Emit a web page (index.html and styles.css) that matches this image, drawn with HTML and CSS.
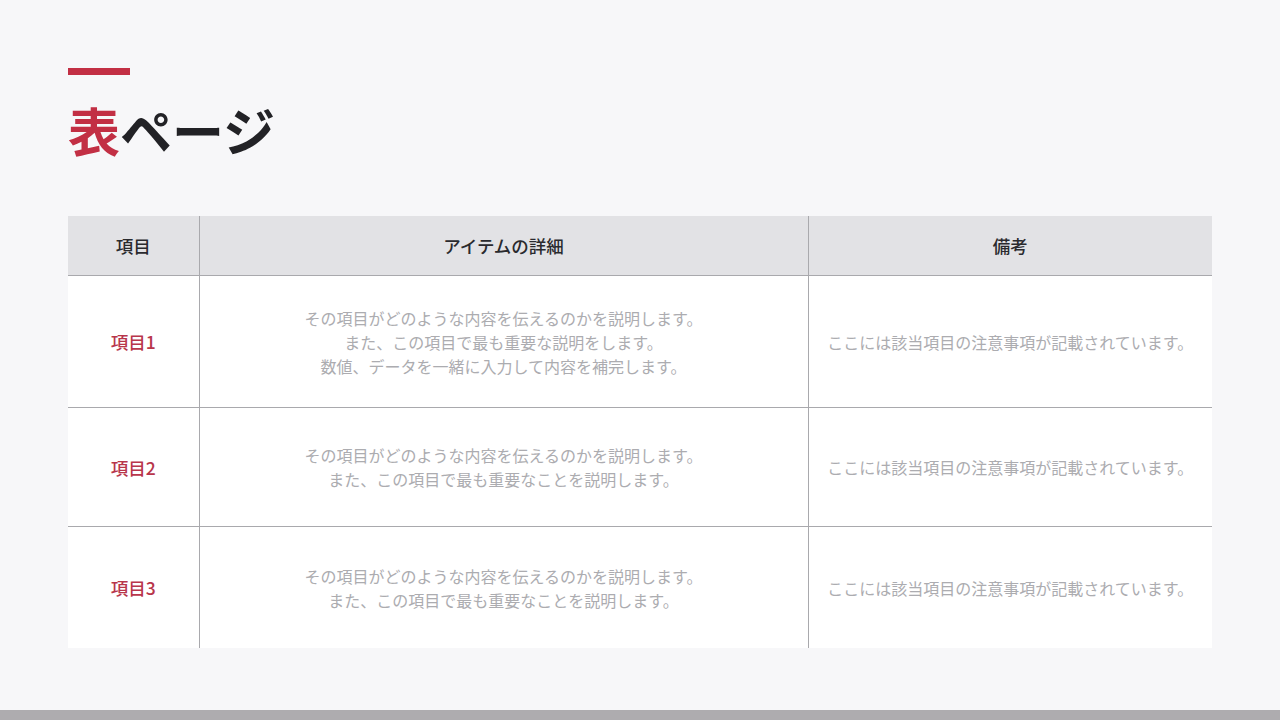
FILE: index.html
```html
<!DOCTYPE html>
<html lang="ja">
<head>
<meta charset="utf-8">
<link rel="stylesheet" href="styles.css">
</head>
<body>
<div class="page">
  <header class="heading">
    <div class="accent"></div>
    <h1 class="title"><span class="red">表</span>ページ</h1>
  </header>
  <table class="tbl">
    <colgroup><col class="c1"><col class="c2"><col class="c3"></colgroup>
    <thead>
      <tr class="head"><th>項目</th><th>アイテムの詳細</th><th>備考</th></tr>
    </thead>
    <tbody>
      <tr class="r1">
        <td class="label">項目1</td>
        <td class="desc">その項目がどのような内容を伝えるのかを説明します。<br>また、この項目で最も重要な説明をします。<br>数値、データを一緒に入力して内容を補完します。</td>
        <td class="desc">ここには該当項目の注意事項が記載されています。</td>
      </tr>
      <tr class="r2">
        <td class="label">項目2</td>
        <td class="desc">その項目がどのような内容を伝えるのかを説明します。<br>また、この項目で最も重要なことを説明します。</td>
        <td class="desc">ここには該当項目の注意事項が記載されています。</td>
      </tr>
      <tr class="r3">
        <td class="label">項目3</td>
        <td class="desc">その項目がどのような内容を伝えるのかを説明します。<br>また、この項目で最も重要なことを説明します。</td>
        <td class="desc">ここには該当項目の注意事項が記載されています。</td>
      </tr>
    </tbody>
  </table>
</div>
<div class="footer-bar"></div>
</body>
</html>
```
FILE: styles.css
```css
html, body {
  margin: 0;
  padding: 0;
}
body {
  width: 1280px;
  height: 720px;
  background: #f7f7f9;
  font-family: "Noto Sans CJK JP", "Noto Sans", sans-serif;
  display: flex;
  flex-direction: column;
  overflow: hidden;
}
.page {
  flex: 1;
  padding: 68px 68px 0 68px;
}
.accent {
  width: 62px;
  height: 7px;
  background: #c22f44;
}
.title {
  margin: 22px 0 0 0;
  font-size: 52px;
  line-height: 66px;
  font-weight: 700;
  color: #222226;
  letter-spacing: 0;
}
.red { color: #c22f44; }
.tbl {
  margin-top: 53px;
  width: 1144px;
  border-collapse: collapse;
  table-layout: fixed;
}
.c1 { width: 131px; }
.c2 { width: 609px; }
.c3 { width: 404px; }
.tbl th, .tbl td {
  text-align: center;
  vertical-align: middle;
  padding: 0;
  border-left: 1px solid #a9a9ad;
}
.tbl th:first-child, .tbl td:first-child { border-left: none; }
.head th {
  height: 59px;
  background: #e2e2e5;
  font-size: 17.5px;
  font-weight: 500;
  color: #2a2a2e;
  border-bottom: 1px solid #a9a9ad;
}
.tbl td {
  background: #ffffff;
  border-bottom: 1px solid #a9a9ad;
}
.tbl tr.r3 td { border-bottom: none; }
.r1 td { height: 131px; }
.r2 td { height: 118px; }
.r3 td { height: 121px; }
.label {
  font-size: 17.5px;
  font-weight: 500;
  color: #b8364b;
}
.desc {
  font-size: 16px;
  line-height: 24px;
  color: #acacb0;
}
.footer-bar {
  height: 10px;
  background: #aeacaf;
}
```
